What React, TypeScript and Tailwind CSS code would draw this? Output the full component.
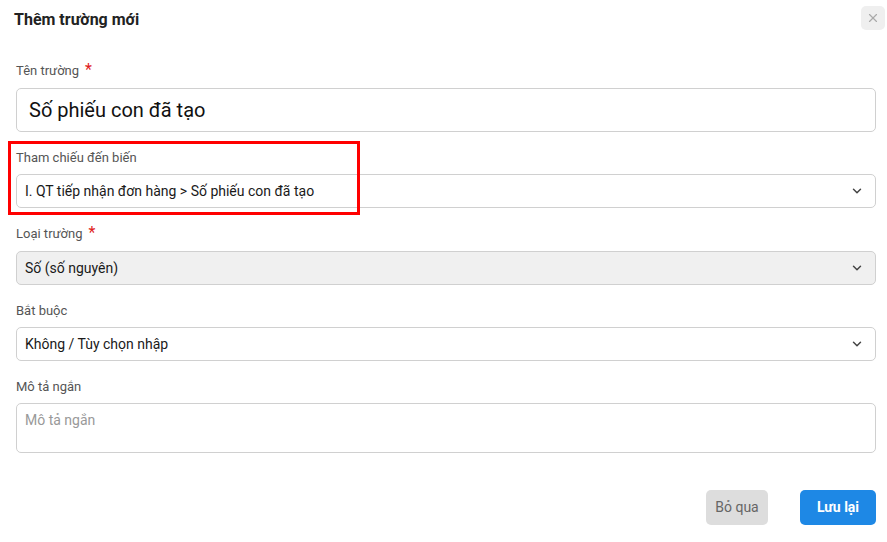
import React, { useState } from 'react';
import { ChevronDown, X } from 'lucide-react';

type SelectFieldProps = {
  label: string;
  required?: boolean;
  value: string;
  disabled?: boolean;
};

const Label: React.FC<{ text: string; required?: boolean }> = ({ text, required }) => (
  <label className={`block text-[13px] leading-[18px] text-[#555] ${required ? 'mb-[8px]' : 'mb-[7px]'}`}>
    {text}
    {required && <span className="ml-[6px] text-[16px] leading-[14px] text-[#e02020]">*</span>}
  </label>
);

const SelectField: React.FC<SelectFieldProps> = ({ label, required, value, disabled }) => (
  <div>
    <Label text={label} required={required} />
    <div
      className={`flex h-[34px] items-center justify-between rounded-[5px] border border-[#d0d0d0] pl-[8px] pr-[11px] text-[14px] text-[#1a1a1a] ${
        disabled ? 'bg-[#f0f0f0]' : 'bg-white'
      }`}
    >
      <span>{value}</span>
      <ChevronDown size={14} strokeWidth={2.5} className="text-[#444]" />
    </div>
  </div>
);

const App: React.FC = () => {
  const [name, setName] = useState('Số phiếu con đã tạo');
  const [description, setDescription] = useState('');

  return (
    <div
      className="relative h-[542px] w-[887px] bg-white"
      style={{ fontFamily: 'Roboto, "Noto Sans", sans-serif' }}
    >
      {/* header */}
      <div className="flex h-[36px] items-center justify-between pl-[14px] pr-[2px]">
        <h2 className="pt-[3px] text-[16px] font-bold text-[#222]">Thêm trường mới</h2>
        <button
          type="button"
          className="flex h-[24px] w-[24px] items-center justify-center rounded-[5px] bg-[#efefef] text-[#aaa]"
        >
          <X size={14} strokeWidth={2} />
        </button>
      </div>

      {/* form */}
      <div className="flex flex-col gap-[17px] pl-[16px] pr-[11px] pt-[26px]">
        <div>
          <Label text="Tên trường" required />
          <input
            value={name}
            onChange={e => setName(e.target.value)}
            className="h-[44px] w-full rounded-[5px] border border-[#d0d0d0] px-[12px] text-[20px] text-[#111] outline-none"
          />
        </div>

        <SelectField label="Tham chiếu đến biến" value="I. QT tiếp nhận đơn hàng > Số phiếu con đã tạo" />
        <SelectField label="Loại trường" required value="Số (số nguyên)" disabled />
        <SelectField label="Bắt buộc" value="Không / Tùy chọn nhập" />

        <div>
          <Label text="Mô tả ngắn" />
          <textarea
            value={description}
            onChange={e => setDescription(e.target.value)}
            placeholder="Mô tả ngắn"
            className="block h-[50px] w-full resize-none rounded-[5px] border border-[#d0d0d0] px-[8px] pt-[6px] text-[14px] leading-[20px] text-[#111] outline-none placeholder:text-[#999]"
          />
        </div>
      </div>

      {/* footer */}
      <div className="mt-[37px] flex justify-end gap-[32px] pr-[11px]">
        <button
          type="button"
          className="h-[35px] w-[62px] rounded-[5px] bg-[#dddddd] text-[14px] text-[#666]"
        >
          Bỏ qua
        </button>
        <button
          type="button"
          className="h-[35px] w-[76px] rounded-[5px] bg-[#1e88e5] text-[14px] font-bold text-white"
        >
          Lưu lại
        </button>
      </div>

      {/* highlight around the reference field */}
      <div className="pointer-events-none absolute left-[8px] top-[141px] h-[74px] w-[352px] border-[3px] border-[#ff0000]" />
    </div>
  );
};

export default App;
